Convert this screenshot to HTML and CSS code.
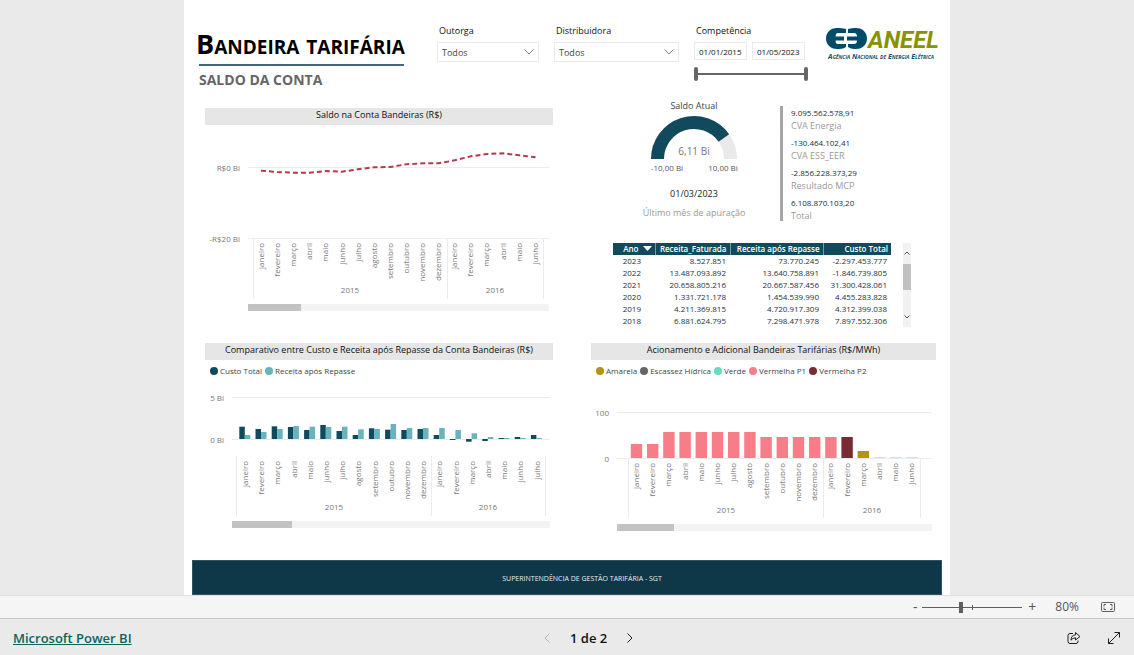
FILE: index.html
```html
<!DOCTYPE html>
<html lang="pt-BR">
<head>
<meta charset="utf-8">
<meta name="viewport" content="width=device-width, initial-scale=1">
<title>Bandeira Tarifária - Saldo da Conta</title>
<link rel="stylesheet" href="styles.css">
</head>
<body>
<main class="stage">
  <div class="report">
    <header class="report-header">
      <div class="heading">
        <h1 class="title">Bandeira tarifária</h1>
        <p class="subtitle">SALDO DA CONTA</p>
      </div>
      <div class="filter">
        <label class="filter-label" for="outorga">Outorga</label>
        <div class="dropdown">
          <select id="outorga" class="dropdown-select"><option>Todos</option></select>
          <svg class="dropdown-arrow" viewBox="0 0 10 6" aria-hidden="true"><path d="M0.5 0.5 5 5 9.5 0.5"/></svg>
        </div>
      </div>
      <div class="filter">
        <label class="filter-label" for="distribuidora">Distribuidora</label>
        <div class="dropdown">
          <select id="distribuidora" class="dropdown-select"><option>Todos</option></select>
          <svg class="dropdown-arrow" viewBox="0 0 10 6" aria-hidden="true"><path d="M0.5 0.5 5 5 9.5 0.5"/></svg>
        </div>
      </div>
      <div class="filter">
        <label class="filter-label" for="inicio">Competência</label>
        <div class="dates">
          <input id="inicio" class="date" type="text" value="01/01/2015">
          <input class="date" type="text" value="01/05/2023" aria-label="Competência final">
        </div>
        <div class="period">
          <input class="period-range" type="range" min="0" max="100" value="0" aria-label="Início do período">
          <input class="period-range" type="range" min="0" max="100" value="100" aria-label="Fim do período">
        </div>
      </div>
      <svg class="logo" viewBox="0 0 115 34" role="img" aria-label="ANEEL">
        <path class="logo-mark" d="M20 2C17 1 14 1 11 1C4 1 0 6 0 11.500S4 22 11 22C14 22 17 22 20 20V17H12Q9.500 17 9.500 13.500H18V9.500H9.500Q9.500 6 12 6H20Z"/>
        <path class="logo-mark" d="M22 2C25 1 28 1 30 1C37 1 41 6 41 11.500S37 22 30 22C28 22 25 22 22 20V17H28Q31 17 31 13.500H21V9.500H31Q31 6 28 6H22Z"/>
        <text class="logo-name" x="42" y="21">ANEEL</text>
        <text class="logo-tag" x="2" y="32">Agência Nacional de Energia Elétrica</text>
      </svg>
    </header>

    <div class="grid">
      <section class="panel panel-balance">
        <h2 class="panel-title">Saldo na Conta Bandeiras (R$)</h2>
        <svg class="chart" id="balance" viewBox="0 0 348 190" role="img" aria-label="Saldo na Conta Bandeiras"></svg>
      </section>

      <section class="summary">
        <div class="indicators">
          <div class="gauge">
            <h2 class="gauge-title">Saldo Atual</h2>
            <svg class="gauge-chart" viewBox="0 0 120 62" role="img" aria-label="6,11 Bi">
              <path class="gauge-rest" d="M95.200 23.300A43 43 0 0 1 103 48H90A30 30 0 0 0 84.600 30.800Z"/>
              <path class="gauge-fill" d="M17 48A43 43 0 0 1 95.200 23.300L84.600 30.800A30 30 0 0 0 30 48Z"/>
              <text class="gauge-value" x="60" y="44">6,11 Bi</text>
              <text class="gauge-limit" x="33" y="60">-10,00 Bi</text>
              <text class="gauge-limit" x="89" y="60">10,00 Bi</text>
            </svg>
            <p class="gauge-date">01/03/2023</p>
            <p class="gauge-caption">Último mês de apuração</p>
          </div>
          <dl class="kpis">
            <div class="kpi"><dd class="kpi-value">9.095.562.578,91</dd><dt class="kpi-name">CVA Energia</dt></div>
            <div class="kpi"><dd class="kpi-value">-130.464.102,41</dd><dt class="kpi-name">CVA ESS_EER</dt></div>
            <div class="kpi"><dd class="kpi-value">-2.856.228.373,29</dd><dt class="kpi-name">Resultado MCP</dt></div>
            <div class="kpi"><dd class="kpi-value">6.108.870.103,20</dd><dt class="kpi-name">Total</dt></div>
          </dl>
        </div>
        <div class="table-area">
          <table class="table">
            <colgroup><col class="col-year"><col class="col-billed"><col class="col-revenue"><col class="col-cost"></colgroup>
            <thead><tr><th>Ano<svg class="sort" viewBox="0 0 9 5" aria-hidden="true"><path d="M0 0H9L4.500 5Z"/></svg></th><th>Receita_Faturada</th><th>Receita após Repasse</th><th>Custo Total</th></tr></thead>
            <tbody>
              <tr><td>2023</td><td>8.527.851</td><td>73.770.245</td><td>-2.297.453.777</td></tr>
              <tr><td>2022</td><td>13.487.093.892</td><td>13.640.758.891</td><td>-1.846.739.805</td></tr>
              <tr><td>2021</td><td>20.658.805.216</td><td>20.667.587.456</td><td>31.300.428.061</td></tr>
              <tr><td>2020</td><td>1.331.721.178</td><td>1.454.539.990</td><td>4.455.283.828</td></tr>
              <tr><td>2019</td><td>4.211.369.815</td><td>4.720.917.309</td><td>4.312.399.038</td></tr>
              <tr><td>2018</td><td>6.881.624.795</td><td>7.298.471.978</td><td>7.897.552.306</td></tr>
            </tbody>
          </table>
          <div class="scroll">
            <svg class="scroll-arrow" viewBox="0 0 6 4" aria-hidden="true"><path d="M0.500 3.500 3 1 5.500 3.500"/></svg>
            <div class="scroll-thumb"></div>
            <svg class="scroll-arrow" viewBox="0 0 6 4" aria-hidden="true"><path d="M0.500 0.500 3 3 5.500 0.500"/></svg>
          </div>
        </div>
      </section>

      <section class="panel">
        <h2 class="panel-title">Comparativo entre Custo e Receita após Repasse da Conta Bandeiras (R$)</h2>
        <ul class="legend">
          <li class="legend-item custo">Custo Total</li>
          <li class="legend-item receita">Receita após Repasse</li>
        </ul>
        <svg class="chart" id="comparison" viewBox="0 0 348 150" role="img" aria-label="Comparativo entre Custo e Receita"></svg>
      </section>

      <section class="panel">
        <h2 class="panel-title">Acionamento e Adicional Bandeiras Tarifárias (R$/MWh)</h2>
        <ul class="legend">
          <li class="legend-item amarela">Amarela</li>
          <li class="legend-item escassez">Escassez Hídrica</li>
          <li class="legend-item verde">Verde</li>
          <li class="legend-item p1">Vermelha P1</li>
          <li class="legend-item p2">Vermelha P2</li>
        </ul>
        <svg class="chart" id="flags" viewBox="0 0 345 153" role="img" aria-label="Acionamento e Adicional Bandeiras"></svg>
      </section>
    </div>

    <footer class="report-footer">SUPERINTENDÊNCIA DE GESTÃO TARIFÁRIA - SGT</footer>
  </div>
</main>

<div class="zoombar">
  <button class="zoom-button" type="button" aria-label="Reduzir">-</button>
  <div class="zoom-track">
    <input class="zoom-range" type="range" min="0" max="100" value="38" aria-label="Zoom">
    <span class="zoom-tick"></span>
  </div>
  <button class="zoom-button" type="button" aria-label="Ampliar">+</button>
  <span class="zoom-value">80%</span>
  <button class="icon-button" type="button" aria-label="Ajustar à página">
    <svg class="icon-fit" viewBox="0 0 14 10" aria-hidden="true"><rect x="0.500" y="0.500" width="13" height="9" rx="1"/><path d="M5 2.500H3V4.500M9 2.500H11V4.500M5 7.500H3V5.500M9 7.500H11V5.500"/></svg>
  </button>
</div>

<nav class="navbar">
  <a class="brand" href="#">Microsoft Power BI</a>
  <div class="pager">
    <button class="icon-button previous" type="button" aria-label="Página anterior" disabled><svg class="icon-chevron" viewBox="0 0 6 10" aria-hidden="true"><path d="M5.500 0.500 1 5 5.500 9.500"/></svg></button>
    <span class="page">1 de 2</span>
    <button class="icon-button" type="button" aria-label="Próxima página"><svg class="icon-chevron" viewBox="0 0 6 10" aria-hidden="true"><path d="M0.500 0.500 5 5 0.500 9.500"/></svg></button>
  </div>
  <div class="actions">
    <button class="icon-button" type="button" aria-label="Compartilhar"><svg class="icon-action" viewBox="0 0 14 14" aria-hidden="true"><path d="M6 2.500H3Q1 2.500 1 4.500V10.500Q1 12.500 3 12.500H9Q11 12.500 11 10.500V9.500M8.500 1.500 13 5.500 8.500 9V6.800Q5.500 6.800 4 9.200 4 4.200 8.500 3.900Z"/></svg></button>
    <button class="icon-button" type="button" aria-label="Tela inteira"><svg class="icon-action" viewBox="0 0 14 14" aria-hidden="true"><path d="M1.500 12.500 12.500 1.500M7.500 1.500H12.500V6.500M1.500 7.500V12.500H6.500"/></svg></button>
  </div>
</nav>
<script src="charts.js"></script>
</body>
</html>
```
FILE: styles.css
```css
* { box-sizing: border-box; }

body {
  margin: 0;
  min-height: 100vh;
  display: flex;
  flex-direction: column;
  background: #eaeaea;
  color: #252423;
  font-family: "Segoe UI", "Open Sans", "Noto Sans", sans-serif;
  font-size: 9px;
}

h1, h2, p, dl, dd, ul { margin: 0; padding: 0; font-weight: 400; }
button, input, select { font: inherit; color: inherit; }
button { border: 0; padding: 0; background: none; }

.stage { flex: 1; display: flex; justify-content: center; }

.report {
  width: 100%;
  max-width: 766px;
  display: flex;
  flex-direction: column;
  background: #fff;
}

.report-header {
  display: grid;
  grid-template-columns: 1fr 102px 125px 114px 118px;
  gap: 15px;
  padding: 24px 9px 0 12px;
}

.heading { display: flex; flex-direction: column; white-space: nowrap; }
.title {
  color: #000;
  font-size: 27px;
  line-height: 40px;
  font-weight: 700;
  font-variant: small-caps;
}
.subtitle {
  width: 205px;
  margin-left: 3px;
  padding-top: 4px;
  border-top: 2px solid #436776;
  color: #666;
  font-size: 14px;
  line-height: 20px;
  font-weight: 700;
}

.filter { display: flex; flex-direction: column; gap: 4px; }
.filter-label { padding-left: 2px; font-size: 9px; line-height: 14px; color: #111; }
.dropdown { display: grid; align-items: center; border: 1px solid #eaeaea; }
.dropdown-select {
  grid-area: 1 / 1;
  height: 18px;
  padding: 0 4px;
  border: 0;
  border-radius: 0;
  background: none;
  color: #444;
  font-size: 9px;
  appearance: none;
}
.dropdown-arrow {
  grid-area: 1 / 1;
  justify-self: end;
  width: 10px;
  margin-right: 4px;
  fill: none;
  stroke: #888;
  pointer-events: none;
}
.dates { display: flex; gap: 5px; }
.date {
  width: 53px;
  height: 18px;
  padding: 0 4px;
  border: 1px solid #eaeaea;
  color: #111;
  font-size: 8px;
}
.period {
  display: grid;
  align-items: center;
  margin-top: 3px;
  background: linear-gradient(#666, #666) center / 100% 2px no-repeat;
}
.period-range {
  grid-area: 1 / 1;
  width: 100%;
  height: 14px;
  margin: 0;
  background: none;
  appearance: none;
  pointer-events: none;
}
.period-range::-webkit-slider-thumb {
  width: 4px;
  height: 14px;
  border-radius: 2px;
  background: #666;
  appearance: none;
  pointer-events: auto;
}

.logo { width: 115px; justify-self: end; align-self: start; margin-top: 3px; }
.logo-mark { fill: #004c68; }
.logo-name { fill: #8a9100; font: italic 700 24px Roboto, "Open Sans", sans-serif; }
.logo-tag { fill: #14506a; font: italic 700 7px "Open Sans", sans-serif; font-variant: small-caps; }

.grid {
  display: grid;
  grid-template-columns: 348fr 345fr;
  column-gap: 38px;
  row-gap: 16px;
  padding: 10px 14px 0 21px;
}
.panel-balance { margin-top: 8px; }
.panel-title {
  background: #e6e6e6;
  color: #111;
  font-size: 9px;
  line-height: 13px;
  padding-bottom: 4px;
  text-align: center;
}
.chart { display: block; width: 100%; }

.grid-line { stroke: #ececec; stroke-width: 1; }
.axis { fill: #777; font-size: 8px; }
.axis-value { text-anchor: end; }
.axis-month { text-anchor: end; }
.axis-year { text-anchor: middle; }
.track { fill: #f3f3f3; }
.thumb { fill: #c3c3c3; }
.line { fill: none; stroke: #b73a47; stroke-width: 2; stroke-dasharray: 5 3; stroke-linejoin: round; }
.bar-custo { fill: #124a5d; }
.bar-receita { fill: #69b3bc; }
.bar-p1 { fill: #f77d88; }
.bar-p2 { fill: #752c34; }
.bar-amarela { fill: #b59410; }
.bar-verde { fill: #b9ecdf; }

.legend { display: flex; gap: 3px; height: 21px; align-items: center; padding-left: 5px; list-style: none; color: #444; font-size: 8px; white-space: nowrap; }
.legend-item { display: flex; align-items: center; gap: 2px; }
.legend-item::before { content: ""; width: 8px; height: 8px; border-radius: 50%; background: currentColor; }
.custo::before { background: #124a5d; }
.receita::before { background: #69b3bc; }
.amarela::before { background: #b59410; }
.escassez::before { background: #666; }
.verde::before { background: #67dbc0; }
.p1::before { background: #f77d88; }
.p2::before { background: #752c34; }

.indicators { display: grid; grid-template-columns: 189px 1fr; }
.gauge { padding-left: 17px; text-align: center; }
.gauge-title { font-size: 9px; line-height: 11px; color: #444; }
.gauge-chart { display: block; width: 120px; margin: 0 auto; }
.gauge-fill { fill: #124a5d; }
.gauge-rest { fill: #e9e9e9; }
.gauge-value { fill: #777; font-size: 10px; text-anchor: middle; }
.gauge-limit { fill: #555; font-size: 8px; text-anchor: middle; }
.gauge-date { margin-top: 14px; font-size: 9px; line-height: 14px; }
.gauge-caption { margin-top: 5px; font-size: 9px; line-height: 14px; color: #999; }
.kpis {
  display: flex;
  flex-direction: column;
  gap: 5px;
  align-self: start;
  margin-top: 6px;
  padding-left: 8px;
  border-left: 3px solid #a6a6a6;
}
.kpi-value { line-height: 14px; font-size: 8px; color: #12313d; }
.kpi-name { line-height: 11px; font-size: 9px; color: #999; }

.table-area { display: flex; gap: 12px; margin-top: 22px; padding-left: 22px; }
.table { width: 278px; table-layout: fixed; border-collapse: collapse; font-size: 8px; line-height: 12px; white-space: nowrap; color: #1c323e; }
.table th { padding: 0 3px; background: #124a5d; color: #fff; font-weight: 600; text-align: right; border-right: 1px solid #7d98a3; }
.table th:last-child { border-right: 0; }
.table td { padding: 0 4px 0 0; text-align: right; }
.table th:first-child { padding: 0; }
.table td:first-child { padding-right: 14px; }
.col-year { width: 42px; }
.col-billed { width: 75px; }
.col-revenue { width: 93px; }
.sort { width: 9px; height: 5px; margin: 0 3px 3px 4px; vertical-align: middle; fill: #fff; }
.scroll { display: flex; flex-direction: column; align-items: center; width: 8px; padding: 8px 0; background: #f1f1f1; }
.scroll-arrow { width: 6px; fill: none; stroke: #555; }
.scroll-arrow:last-child { margin-top: auto; }
.scroll-thumb { width: 8px; height: 26px; margin-top: 9px; background: #c1c1c1; }

.report-footer {
  margin: auto 8px 0;
  padding: 13px 0 10px 30px;
  border: 1px solid #2e5563;
  background: #0e3747;
  color: #e6eef1;
  font-size: 7px;
  line-height: 10px;
  text-align: center;
}

.zoombar {
  display: flex;
  align-items: center;
  justify-content: flex-end;
  height: 23px;
  padding-right: 19px;
  border-top: 1px solid #e0e0e0;
  background: #f5f5f5;
  color: #555;
}
.zoom-button { width: 8px; font-size: 14px; line-height: 20px; }
.zoom-track { display: grid; grid-template-columns: 100px; align-items: center; margin: 0 6px 0 3px; }
.zoom-range {
  grid-area: 1 / 1;
  width: 100%;
  height: 12px;
  margin: 0;
  background: linear-gradient(#605e5c, #605e5c) center / 100% 1px no-repeat;
  appearance: none;
}
.zoom-range::-webkit-slider-thumb { width: 4px; height: 11px; background: #605e5c; appearance: none; }
.zoom-tick { grid-area: 1 / 1; width: 1px; height: 5px; margin-left: 50%; background: #605e5c; }
.zoom-value { margin: 0 22px 0 19px; font-size: 12px; line-height: 20px; }
.icon-button { display: flex; align-items: center; color: #222; }
.icon-button svg { fill: none; stroke: currentColor; }
.icon-button .icon-fit { width: 14px; height: 10px; stroke: #605e5c; }

.navbar {
  display: grid;
  grid-template-columns: 541fr auto 498fr;
  align-items: center;
  height: 37px;
  padding-top: 2px;
  border-top: 1px solid #c8c8c8;
  background: #eaeaea;
}
.brand { justify-self: start; margin-left: 13px; color: #10635a; font-size: 13px; line-height: 20px; font-weight: 600; }
.pager { display: flex; align-items: center; gap: 20px; }
.icon-button.previous { color: #b5b5b5; }
.page { font-size: 13px; line-height: 20px; font-weight: 600; color: #111; }
.icon-chevron { width: 6px; height: 10px; }
.actions { display: flex; justify-content: flex-end; gap: 26px; padding-right: 13px; }
.icon-action { width: 14px; height: 14px; }
```
FILE: charts.js
```js
const SVG = "http://www.w3.org/2000/svg";
const MONTHS = ["janeiro", "fevereiro", "março", "abril", "maio", "junho", "julho", "agosto", "setembro", "outubro", "novembro", "dezembro"];

function add(parent, tag, className, attributes, text) {
  const node = document.createElementNS(SVG, tag);
  node.setAttribute("class", className);
  for (const name in attributes) node.setAttribute(name, attributes[name]);
  if (text) node.textContent = text;
  parent.appendChild(node);
}

function drawFrame(svg, o) {
  for (const [y, label] of o.levels) {
    add(svg, "line", "grid-line", { x1: o.left, x2: o.right, y1: y, y2: y });
    add(svg, "text", "axis axis-value", { x: o.left - 8, y: y + 3 }, label);
  }
  for (const x of o.dividers) {
    add(svg, "line", "grid-line", { x1: x, x2: x, y1: o.dividerTop, y2: o.dividerTop + 60 });
  }
  for (let i = 0; i < o.count; i++) {
    const x = o.first + i * o.step + 2;
    add(svg, "text", "axis axis-month", { transform: `translate(${x} ${o.monthTop}) rotate(-90)` }, MONTHS[i % 12]);
  }
  o.years.forEach((x, i) => add(svg, "text", "axis axis-year", { x, y: o.yearY }, String(2015 + i)));
  add(svg, "rect", "track", { x: o.left, y: o.scrollY, width: o.right - o.left, height: 7 });
  add(svg, "rect", "thumb", { x: o.left, y: o.scrollY, width: o.thumb, height: 7 });
}

function drawBar(svg, kind, x, base, width, value) {
  add(svg, "rect", "bar-" + kind, { x, y: value < 0 ? base : base - value, width, height: Math.abs(value) });
}

const balance = document.getElementById("balance");
drawFrame(balance, {
  left: 43, right: 344, levels: [[42.5, "R$0 Bi"], [113.5, "-R$20 Bi"]],
  dividers: [48.5, 242.5, 338.5], dividerTop: 114, first: 57, step: 16.1, count: 18,
  monthTop: 118, years: [145, 290], yearY: 168, scrollY: 179, thumb: 53
});
const balanceY = [45.7, 47, 47.7, 47.7, 46, 46.7, 44.3, 42.3, 42, 39.3, 38.3, 38.3, 35.3, 31.3, 29, 28.3, 30.3, 32.3];
add(balance, "polyline", "line", { points: balanceY.map((y, i) => `${56 + i * 16.15},${y}`).join(" ") });

const comparison = document.getElementById("comparison");
drawFrame(comparison, {
  left: 27, right: 345, levels: [[16.5, "5 Bi"], [58.5, "0 Bi"]],
  dividers: [31.5, 226.5, 340.5], dividerTop: 75, first: 41, step: 16.2, count: 19,
  monthTop: 80, years: [129, 283], yearY: 129, scrollY: 140, thumb: 60
});
const custo = [12.3, 10, 12.7, 12, 9, 14, 8, 4, 10.7, 9.3, 9, 10, 4, -1, -2.7, -2, 1, 2, 4];
const receita = [4, 7, 10, 13, 12.3, 12, 12.3, 9.7, 10, 15, 11, 11, 11, 9, 5.7, 2, 1, 1, 1];
custo.forEach((value, i) => {
  const x = 34.3 + i * 16.2;
  drawBar(comparison, "custo", x, 58, 5.5, value);
  drawBar(comparison, "receita", x + 5.5, 58, 5.5, receita[i]);
});

const flags = document.getElementById("flags");
drawFrame(flags, {
  left: 26, right: 341, levels: [[31.5, "100"], [77.5, "0"]],
  dividers: [37.5, 232.5, 329.5], dividerTop: 77, first: 46, step: 16.2, count: 18,
  monthTop: 82, years: [135, 281], yearY: 132, scrollY: 143, thumb: 57
});
const adicional = [
  ["p1", 14], ["p1", 14], ["p1", 26], ["p1", 26], ["p1", 26], ["p1", 26], ["p1", 26], ["p1", 26],
  ["p1", 21], ["p1", 21], ["p1", 21], ["p1", 21], ["p1", 21], ["p2", 21], ["amarela", 7],
  ["verde", 1], ["verde", 1], ["verde", 1]
];
adicional.forEach(([kind, value], i) => drawBar(flags, kind, 39.8 + i * 16.2, 77, 11.4, value));
```
